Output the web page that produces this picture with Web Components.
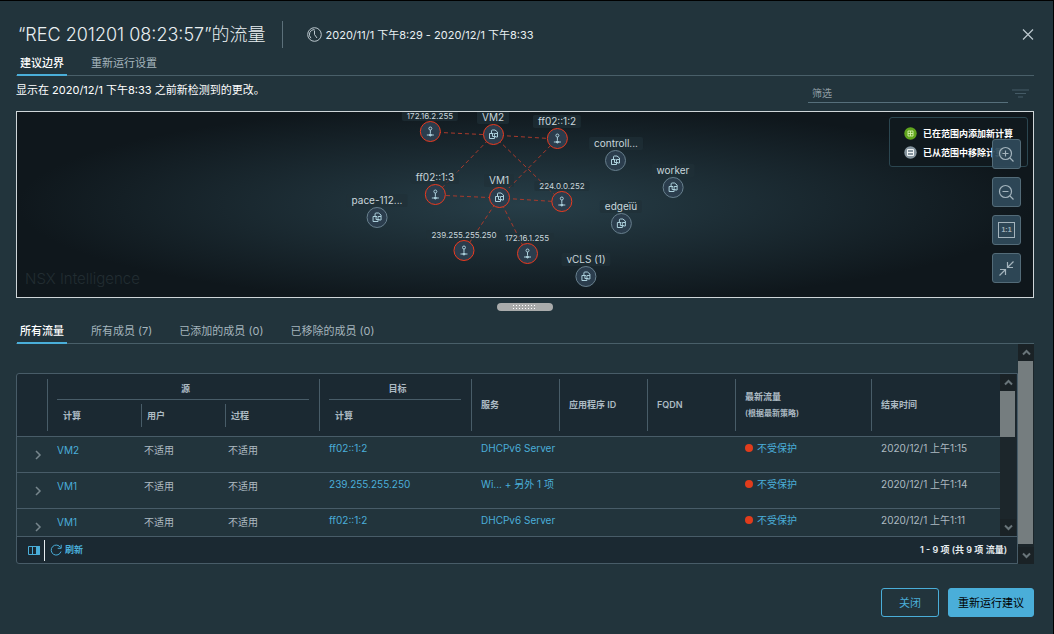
<!DOCTYPE html>
<html lang="zh-CN">
<head>
<meta charset="utf-8">
<title>流量建议</title>
<style>
html, body { margin: 0; min-height: 100%; background: #22343c; }
body { font: 11px/16px Inter, "Noto Sans CJK SC", sans-serif; color: #e9eff2; }
</style>
</head>
<body>
<flow-dialog>
  <tab-strip slot="tabs" labels="建议边界|重新运行设置"></tab-strip>
  <filter-bar slot="filter">显示在 2020/12/1 下午8:33 之前新检测到的更改。</filter-bar>
  <topology-view slot="map"></topology-view>
  <tab-strip slot="lists" labels="所有流量|所有成员 (7)|已添加的成员 (0)|已移除的成员 (0)"></tab-strip>
  <flow-grid slot="grid"></flow-grid>
  <action-button slot="actions">关闭</action-button>
  <action-button slot="actions" primary>重新运行建议</action-button>
</flow-dialog>
<script>
const define = (name, html, setup) => customElements.define(name, class extends HTMLElement {
  connectedCallback() {
    if (this.shadowRoot) return;
    this.attachShadow({ mode: 'open' }).innerHTML = html;
    if (setup) setup(this, this.shadowRoot);
  }
});

define('action-button', `<style>
:host { display: block; }
button { font: inherit; height: 29px; padding: 0 17px; border: 1px solid #4aaed9; border-radius: 3px; background: transparent; color: #4aaed9; cursor: pointer; }
:host([primary]) button { padding: 0 9px; background: #4aaed9; color: #000; }
</style><button type="button"><slot></slot></button>`);

define('tab-strip', `<style>
:host { display: block; border-bottom: 1px solid #495f69; }
div { display: flex; gap: 21px; padding-left: 1px; }
button { font: inherit; color: #a5b5bd; background: none; border: 0; border-bottom: 2px solid transparent; padding: 0 3px; height: 24px; margin-bottom: -1px; white-space: nowrap; cursor: pointer; }
button[aria-selected=true] { color: #fff; font-weight: 500; border-color: #4aaed9; }
</style><div role="tablist"></div>`, (el, root) => {
  root.querySelector('div').innerHTML = el.getAttribute('labels').split('|')
    .map((t, i) => `<button type="button" role="tab" aria-selected="${i === 0}">${t}</button>`).join('');
});

define('filter-bar', `<style>
:host { display: flex; justify-content: space-between; align-items: flex-start; height: 35px; }
p { margin: 6px 0 0; color: #fff; }
form { display: flex; margin: 0; padding-top: 7px; }
input { box-sizing: border-box; width: 200px; height: 20px; padding: 0 4px; background: none; border: 0; border-bottom: 1px solid #566f7b; color: #fff; font: inherit; font-size: 10px; outline: 0; }
input::placeholder { color: #8e9ca3; opacity: 1; }
button { width: 26px; padding: 0; border: 0; background: none; height: 20px; }
svg { display: block; margin-left: 3px; }
</style><p><slot></slot></p>
<form><input type="text" aria-label="筛选" placeholder="筛选">
<button type="button" aria-label="筛选选项"><svg width="19" height="12" fill="none" stroke="#455b66" stroke-width="1.2"><path d="M1 3H18M4 6.500H15M7 10H12"/></svg></button></form>`);

define('scroll-bar', `<style>
:host { display: flex; flex-direction: column; width: 16px; flex: none; background: #1c262b; }
button { height: 17px; flex: none; padding: 0; border: 0; background: #1a2226; display: grid; place-items: center; }
.track { flex: 1; }
.thumb { height: var(--thumb, 100%); background: #757d7f; margin: 0 1px 0 0; }
svg { fill: none; stroke: #69757a; stroke-width: 2; }
</style><button type="button" aria-label="向上滚动"><svg width="9" height="7"><path d="M1 5.500L4.500 2L8 5.500"/></svg></button>
<div class="track"><div class="thumb"></div></div>
<button type="button" aria-label="向下滚动"><svg width="9" height="7"><path d="M1 1.500L4.500 5L8 1.500"/></svg></button>`);

const nodeIcons = {
  vm: '<path d="M3.500 4V2Q3.500 1 4.500 1H7L9.500 3V8H7.500M1.500 4.500H5.500M1.500 4.500V9.500H6.500V6.500M4.500 4.500V7.500H8M9.500 4.500H6.500V6.500"/>',
  ip: '<circle cx="5.500" cy="2.500" r="1.500"/><path d="M5.500 4V7.500M2 9H9"/><circle cx="5.500" cy="9" r="1" fill="#acd0dc"/>'
};
/* A node is anchored on the centre of its circle. */
define('topo-node', `<style>
:host { position: absolute; transform: translate(-50%, -24px); display: flex; flex-direction: column; align-items: center; width: max-content; }
span { font-size: 10px; line-height: 13px; height: 13px; padding: 0 5px; background: #1f3038aa; border-radius: 2px; color: #c9d6dc; }
:host([small]) { transform: translate(-50%, -21px); }
:host([small]) span { font-size: 8px; line-height: 10px; height: 10px; }
i { box-sizing: border-box; width: 21px; height: 21px; border: 1px solid #68808e; border-radius: 50%; background: #2b3d4d; display: grid; place-items: center; }
:host([alert]) i { border-color: #ee3a1e; }
svg { fill: none; stroke: #acd0dc; stroke-width: 1; display: block; }
</style><span><slot></slot></span><i></i>`, (el, root) => {
  root.querySelector('i').innerHTML = `<svg width="11" height="11">${nodeIcons[el.getAttribute('kind')]}</svg>`;
});

const nodes = {
  a: [85, 20, 'ip', '172.16.2.255', 1, 1], b: [148, 23, 'vm', 'VM2', 1, 0], c: [212, 27, 'ip', 'ff02::1:2', 1, 0],
  d: [90, 83, 'ip', 'ff02::1:3', 1, 0], e: [154, 86, 'vm', 'VM1', 1, 0], f: [217, 90, 'ip', '224.0.0.252', 1, 1],
  g: [119, 139, 'ip', '239.255.255.250', 1, 1], h: [182, 142, 'ip', '172.16.1.255', 1, 1],
  i: [32, 106, 'vm', 'pace-112...', 0, 0], j: [271, 49, 'vm', 'controll...', 0, 0], k: [328, 76, 'vm', 'worker', 0, 0],
  l: [276, 112, 'vm', 'edgeïü', 0, 0], m: [241, 165, 'vm', 'vCLS (1)', 0, 0]
};
const edges = ['ab', 'bc', 'bd', 'bf', 'ec', 'ed', 'ef', 'eg', 'eh'];

define('topology-view', `<style>
:host { display: block; }
.view { position: relative; height: 185px; overflow: hidden; border: 1px solid #cfd6d9; background: radial-gradient(ellipse 50% 54% at center, #273e48, #0f171c); }
.stage { position: relative; width: 360px; height: 185px; margin: 0 auto; }
.edges { position: absolute; inset: 0; stroke: #a93a2c; stroke-dasharray: 4 3; }
.mark { position: absolute; left: 8px; bottom: 8px; font-size: 15px; line-height: 20px; font-weight: 300; color: #222d32; }
.legend { position: absolute; top: 5px; right: 5px; box-sizing: border-box; width: 139px; height: 50px; border: 1px solid #2b4650; border-radius: 3px; background: #10191e; margin: 0; padding: 6px 14px; list-style: none; font-size: 9px; font-weight: 600; line-height: 19px; color: #fff; white-space: nowrap; }
.legend li { display: flex; align-items: center; gap: 6px; }
.tools { position: absolute; top: 27px; right: 12px; display: grid; gap: 8px; }
.tools button { box-sizing: border-box; width: 29px; height: 30px; padding: 0; border: 1px solid #536b78; border-radius: 3px; background: #2f4a5aee; display: grid; place-items: center; }
.tools svg { fill: none; stroke: #a3b3bc; stroke-width: 1.2; }
.one { box-sizing: border-box; width: 17px; height: 16px; border: 1px solid #a3b3bc; font-size: 7px; line-height: 14px; font-weight: 600; color: #a3b3bc; }
.grip { display: block; width: 56px; height: 8px; margin: 5px auto 0; border-radius: 4px; background: #a9abab; }
.grip svg { display: block; margin: 0 auto; }
</style>
<div class="view">
  <div class="mark">NSX Intelligence</div>
  <div class="stage"><svg class="edges" width="360" height="185"></svg></div>
  <ul class="legend">
    <li><svg width="13" height="13" fill="none" stroke="#d4efaa"><circle cx="6.500" cy="6.500" r="6.200" fill="#60a51e" stroke="none"/><path d="M4 4H9V9H4ZM6.500 4V9M4 6.500H9" stroke-width=".9"/></svg>已在范围内添加新计算</li>
    <li><svg width="13" height="13" fill="none" stroke="#f0f4f5"><circle cx="6.500" cy="6.500" r="6.200" fill="#8796a0" stroke="none"/><path d="M3.500 3.500H9.500V9.500H3.500ZM3.500 6.500H9.500"/></svg>已从范围中移除计算</li>
  </ul>
  <div class="tools">
    <button type="button" aria-label="放大"><svg width="17" height="17"><circle cx="7.500" cy="7.500" r="6"/><path d="M12 12L15.500 15.500M4.500 7.500H10.500M7.500 4.500V10.500"/></svg></button>
    <button type="button" aria-label="缩小"><svg width="17" height="17"><circle cx="7.500" cy="7.500" r="6"/><path d="M12 12L15.500 15.500M4.500 7.500H10.500"/></svg></button>
    <button type="button" aria-label="实际大小"><span class="one">1:1</span></button>
    <button type="button" aria-label="适合窗口"><svg width="17" height="17"><path d="M15.500 1.500L9.500 7.500M9.500 2V7.500H15M1.500 15.500L7.500 9.500M2 9.500H7.500V15"/></svg></button>
  </div>
</div>
<div class="grip"><svg width="26" height="8" stroke="#fff" stroke-width="1" stroke-dasharray="1 2"><path d="M1 2.500H25M1 5.500H25"/></svg></div>`, (el, root) => {
  const stage = root.querySelector('.stage');
  root.querySelector('.edges').innerHTML = edges.map(([p, q]) =>
    `<line x1="${nodes[p][0]}" y1="${nodes[p][1]}" x2="${nodes[q][0]}" y2="${nodes[q][1]}"/>`).join('');
  stage.insertAdjacentHTML('beforeend', Object.values(nodes).map(([x, y, kind, label, alert, small]) =>
    `<topo-node kind="${kind}" ${alert ? 'alert' : ''} ${small ? 'small' : ''} style="left:${x}px;top:${y}px">${label}</topo-node>`).join(''));
});

const rows = [
  ['VM2', 'ff02::1:2', 'DHCPv6 Server', '2020/12/1 上午1:15'],
  ['VM1', '239.255.255.250', 'Wi... + 另外 1 项', '2020/12/1 上午1:14'],
  ['VM1', 'ff02::1:2', 'DHCPv6 Server', '2020/12/1 上午1:11']
];
define('flow-grid', `<style>
:host { display: flex; align-items: stretch; --line: #485c68; }
.panel { flex: 1; min-width: 0; box-sizing: border-box; margin-top: 29px; border: 1px solid var(--line); border-radius: 3px 0 0 3px; background: #1b2932; }
.outer { --thumb: calc(100% - 3px); }
.inner { --thumb: 46px; margin-right: 1px; }
.body { display: flex; height: 162px; border-bottom: 1px solid var(--line); }
.clip { flex: 1; min-width: 0; overflow: hidden; }
table { width: 100%; table-layout: fixed; border-collapse: separate; border-spacing: 0; }
th { height: 62px; padding: 0 10px; border-bottom: 1px solid var(--line); text-align: left; font-size: 9px; font-weight: 600; color: #adbbc4; background: linear-gradient(var(--line), var(--line)) left 5px / 1px calc(100% - 10px) no-repeat; }
th:first-child[rowspan] { background: none; }
th small { display: block; font-size: 8px; white-space: nowrap; }
th.group { height: 26px; padding: 0 10px; border: 0; text-align: center; background-size: 1px 100%; }
th.group span { display: block; height: 18px; padding: 7px 0 0 5px; border-bottom: 1px solid var(--line); }
.sub th { height: 32px; padding: 0 6px 4px; background-position: left 4px; background-size: 1px 23px; }
.sub th.lead { padding-left: 16px; background-position: left top; background-size: 1px 31px; }
td { height: 32px; padding: 3px 8px 0 10px; border-bottom: 1px solid var(--line); vertical-align: top; background: #22343c; color: #aebbc2; font-size: 10px; white-space: nowrap; }
td, th { box-sizing: content-box; }
td.src { height: 30px; padding-top: 5px; }
td.na { height: 30px; padding: 5px 0 0 3px; }
td.more { height: 25px; padding: 10px 0 0 17px; }
td.svc { padding-right: 0; }
a { color: #4aaed9; text-decoration: none; }
.more button { display: block; padding: 0; border: 0; background: none; }
.more svg { display: block; fill: none; stroke: #77868d; stroke-width: 1.5; }
.state { display: flex; align-items: center; gap: 4px; }
.state::before { content: ""; width: 8px; height: 8px; border-radius: 50%; background: #e13c1c; }
footer { display: flex; align-items: center; height: 26px; font-size: 9px; padding: 0 10px 0 11px; font-weight: 600; color: #e6ecef; }
footer button { display: flex; align-items: center; gap: 3px; font: inherit; color: #4aaed9; background: none; border: 0; padding: 0; }
footer hr { width: 1px; height: 21px; border: 0; margin: 0 5px 0 4px; background: #e6ecef; }
footer span { margin-left: auto; }
</style>
<div class="panel">
  <div class="body"><div class="clip"><table>
    <colgroup><col style="width:30px"><col style="width:94px"><col style="width:84px"><col style="width:94px"><col style="width:152px"><col style="width:88px"><col style="width:88px"><col style="width:88px"><col style="width:136px"><col></colgroup>
    <thead>
      <tr><th rowspan="2"></th><th class="group" colspan="3"><span>源</span></th><th class="group"><span>目标</span></th><th rowspan="2">服务</th><th rowspan="2">应用程序 ID</th><th rowspan="2">FQDN</th><th rowspan="2">最新流量<small>(根据最新策略)</small></th><th rowspan="2">结束时间</th></tr>
      <tr class="sub"><th class="lead">计算</th><th>用户</th><th>过程</th><th class="lead">计算</th></tr>
    </thead><tbody></tbody></table></div>
    <scroll-bar class="inner"></scroll-bar></div>
  <footer><button type="button" aria-label="列"><svg width="12" height="11" fill="none" stroke="#4aaed9"><path d="M.5 1.500H11.500V9.500H.5ZM4.500 1.500V9.500"/><path d="M8.500 1.500H11.500V9.500H8.500Z" fill="#4aaed9"/></svg></button><hr>
    <button type="button"><svg width="12" height="12" fill="none" stroke="#4aaed9"><path d="M10.500 3.500A5 5 0 1 0 11 7.500M11.200 .8V4.300H7.700"/></svg>刷新</button>
    <span>1 - 9 项 (共 9 项 流量)</span></footer>
</div>
<scroll-bar class="outer"></scroll-bar>`, (el, root) => {
  root.querySelector('tbody').innerHTML = rows.map(([vm, dst, svc, end]) => `<tr>
    <td class="more"><button type="button" aria-label="展开"><svg width="8" height="16"><path d="M2 4L6 8L2 12"/></svg></button></td>
    <td class="src"><a href="#">${vm}</a></td><td class="na">不适用</td><td class="na">不适用</td>
    <td><a href="#">${dst}</a></td><td class="svc"><a href="#">${svc}</a></td><td></td><td></td>
    <td><div class="state"><a href="#">不受保护</a></div></td><td>${end}</td></tr>`).join('');
});

define('flow-dialog', `<style>
:host { display: flex; flex-direction: column; box-sizing: border-box; min-height: 100vh; padding: 0 19px 16px 16px; border-top: 1px solid #000; border-right: 1px solid #000; background: #22343c; }
header { display: flex; align-items: center; padding: 20px 0 4px 2px; }
h1 { margin: 0; padding-right: 16px; border-right: 1px solid #5c707a; font-size: 18px; font-weight: 300; line-height: 27px; white-space: nowrap; }
.time { display: flex; align-items: center; gap: 4px; padding-left: 24px; white-space: nowrap; }
.close { margin-left: auto; padding: 0; border: 0; background: none; height: 13px; }
svg { display: block; fill: none; stroke: #bdc9cf; }
.lists { margin-top: 9px; }
.actions { display: flex; justify-content: flex-end; gap: 9px; margin-top: 24px; }
</style>
<header><h1>“REC 201201 08:23:57”的流量</h1>
<div class="time"><svg width="15" height="15"><circle cx="7.500" cy="7.500" r="6.800"/><path d="M4 11.200A5 5 0 0 1 7.500 2.500M7.500 3.500V7.500L10 11"/></svg><span>2020/11/1 下午8:29 - 2020/12/1 下午8:33</span></div>
<button class="close" type="button" aria-label="关闭"><svg width="12" height="13" stroke-width="1.2"><path d="M1 1.500L11 11.500M11 1.500L1 11.500"/></svg></button></header>
<slot name="tabs"></slot><slot name="filter"></slot><slot name="map"></slot>
<div class="lists"><slot name="lists"></slot></div>
<slot name="grid"></slot>
<div class="actions"><slot name="actions"></slot></div>`);
</script>
</body>
</html>
